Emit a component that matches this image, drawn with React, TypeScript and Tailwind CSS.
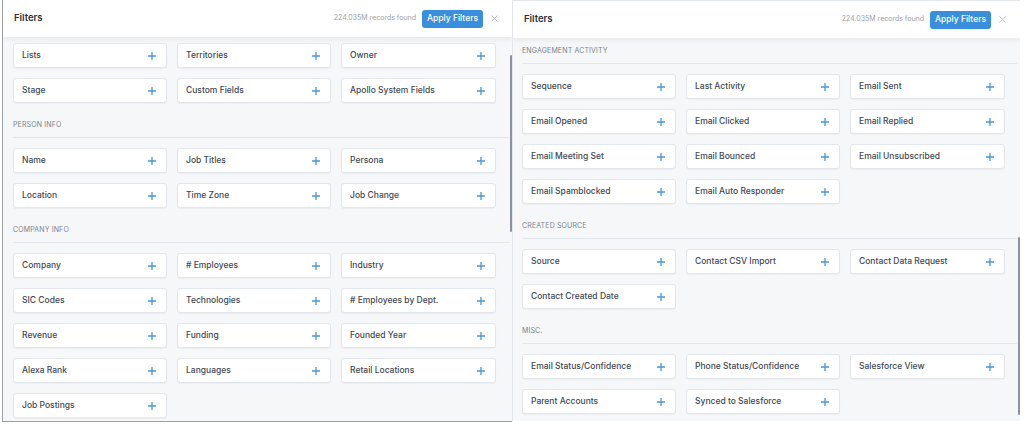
import { X } from 'lucide-react';

type Section = { title?: string; items: string[] };

const LEFT: Section[] = [
  { items: ['Lists', 'Territories', 'Owner', 'Stage', 'Custom Fields', 'Apollo System Fields'] },
  { title: 'PERSON INFO', items: ['Name', 'Job Titles', 'Persona', 'Location', 'Time Zone', 'Job Change'] },
  {
    title: 'COMPANY INFO',
    items: [
      'Company',
      '# Employees',
      'Industry',
      'SIC Codes',
      'Technologies',
      '# Employees by Dept.',
      'Revenue',
      'Funding',
      'Founded Year',
      'Alexa Rank',
      'Languages',
      'Retail Locations',
      'Job Postings',
    ],
  },
];

const RIGHT: Section[] = [
  {
    title: 'ENGAGEMENT ACTIVITY',
    items: [
      'Sequence',
      'Last Activity',
      'Email Sent',
      'Email Opened',
      'Email Clicked',
      'Email Replied',
      'Email Meeting Set',
      'Email Bounced',
      'Email Unsubscribed',
      'Email Spamblocked',
      'Email Auto Responder',
    ],
  },
  { title: 'CREATED SOURCE', items: ['Source', 'Contact CSV Import', 'Contact Data Request', 'Contact Created Date'] },
  {
    title: 'MISC.',
    items: ['Email Status/Confidence', 'Phone Status/Confidence', 'Salesforce View', 'Parent Accounts', 'Synced to Salesforce'],
  },
];

const FilterCard = ({ label }: { label: string }) => (
  <div className="flex h-[25px] items-center justify-between rounded-[3px] border border-[#e3e6ea] bg-white pl-[8px] pr-[10px] shadow-[0_1px_1px_rgba(0,0,0,0.04)]">
    <span className="text-[8.5px] font-medium text-[#424854]">{label}</span>
    <svg width="8" height="8" viewBox="0 0 8 8" className="text-[#4597da]">
      <path d="M4 0v8M0 4h8" stroke="currentColor" strokeWidth="1.3" />
    </svg>
  </div>
);

const SectionBlock = ({ section, first }: { section: Section; first: boolean }) => (
  <div>
    {section.title ? (
      <>
        <div className={`flex h-[12px] items-center text-[7px] tracking-[0.02em] text-[#7b818c] ${first ? 'mt-[7px]' : 'mt-[16px]'}`}>
          {section.title}
        </div>
        <div className="-mr-[11px] mt-[6px] border-t border-[#e4e7eb]" />
      </>
    ) : null}
    <div className={`grid grid-cols-[154px_154px_155px] gap-[10px] ${section.title ? 'mt-[10px]' : 'mt-[6px]'}`}>
      {section.items.map((item) => (
        <FilterCard key={item} label={item} />
      ))}
    </div>
  </div>
);

const Header = () => (
  <div className="relative z-10 flex h-[37px] shrink-0 items-center justify-between bg-white pl-[11px] pr-[12px] shadow-[0_2px_5px_rgba(0,0,0,0.07)]">
    <span className="text-[9.5px] font-semibold text-[#2b3039]">Filters</span>
    <div className="flex items-center">
      <span className="text-[7px] text-[#9aa0a9]">224.035M records found</span>
      <button
        type="button"
        className="ml-[6px] flex h-[18px] items-center rounded-[3px] bg-[#3a8fdc] px-[5px] text-[8.5px] font-medium text-white"
      >
        Apply Filters
      </button>
      <X className="ml-[6px] h-[11px] w-[11px] text-[#a4a9b1]" strokeWidth={1.6} />
    </div>
  </div>
);

const Panel = ({
  sections,
  className,
  bodyClass,
  scroll,
}: {
  sections: Section[];
  className: string;
  bodyClass: string;
  scroll: { top: number; height: number };
}) => (
  <div className={`relative flex flex-col overflow-hidden bg-[#f6f7f9] ${className}`}>
    <Header />
    <div className={`flex-1 pr-[14px] ${bodyClass}`}>
      {sections.map((s, i) => (
        <SectionBlock key={i} section={s} first={i === 0} />
      ))}
    </div>
    <div
      className="absolute right-[0px] w-[2px] rounded-full bg-[#8d939c]"
      style={{ top: scroll.top, height: scroll.height }}
    />
  </div>
);

export default function App() {
  return (
    <div className="flex h-[425px] w-[1024px] bg-white font-['Inter','Liberation_Sans',sans-serif]">
      <Panel
        sections={LEFT}
        className="ml-[2px] h-[422px] w-[510px] border-b border-l border-[#9da2a9]"
        bodyClass="pl-[10px]"
        scroll={{ top: 55, height: 177 }}
      />
      <Panel
        sections={RIGHT}
        className="h-[421px] w-[508px] border-l border-t border-[#e2e5e9]"
        bodyClass="pl-[9px]"
        scroll={{ top: 236, height: 178 }}
      />
    </div>
  );
}
